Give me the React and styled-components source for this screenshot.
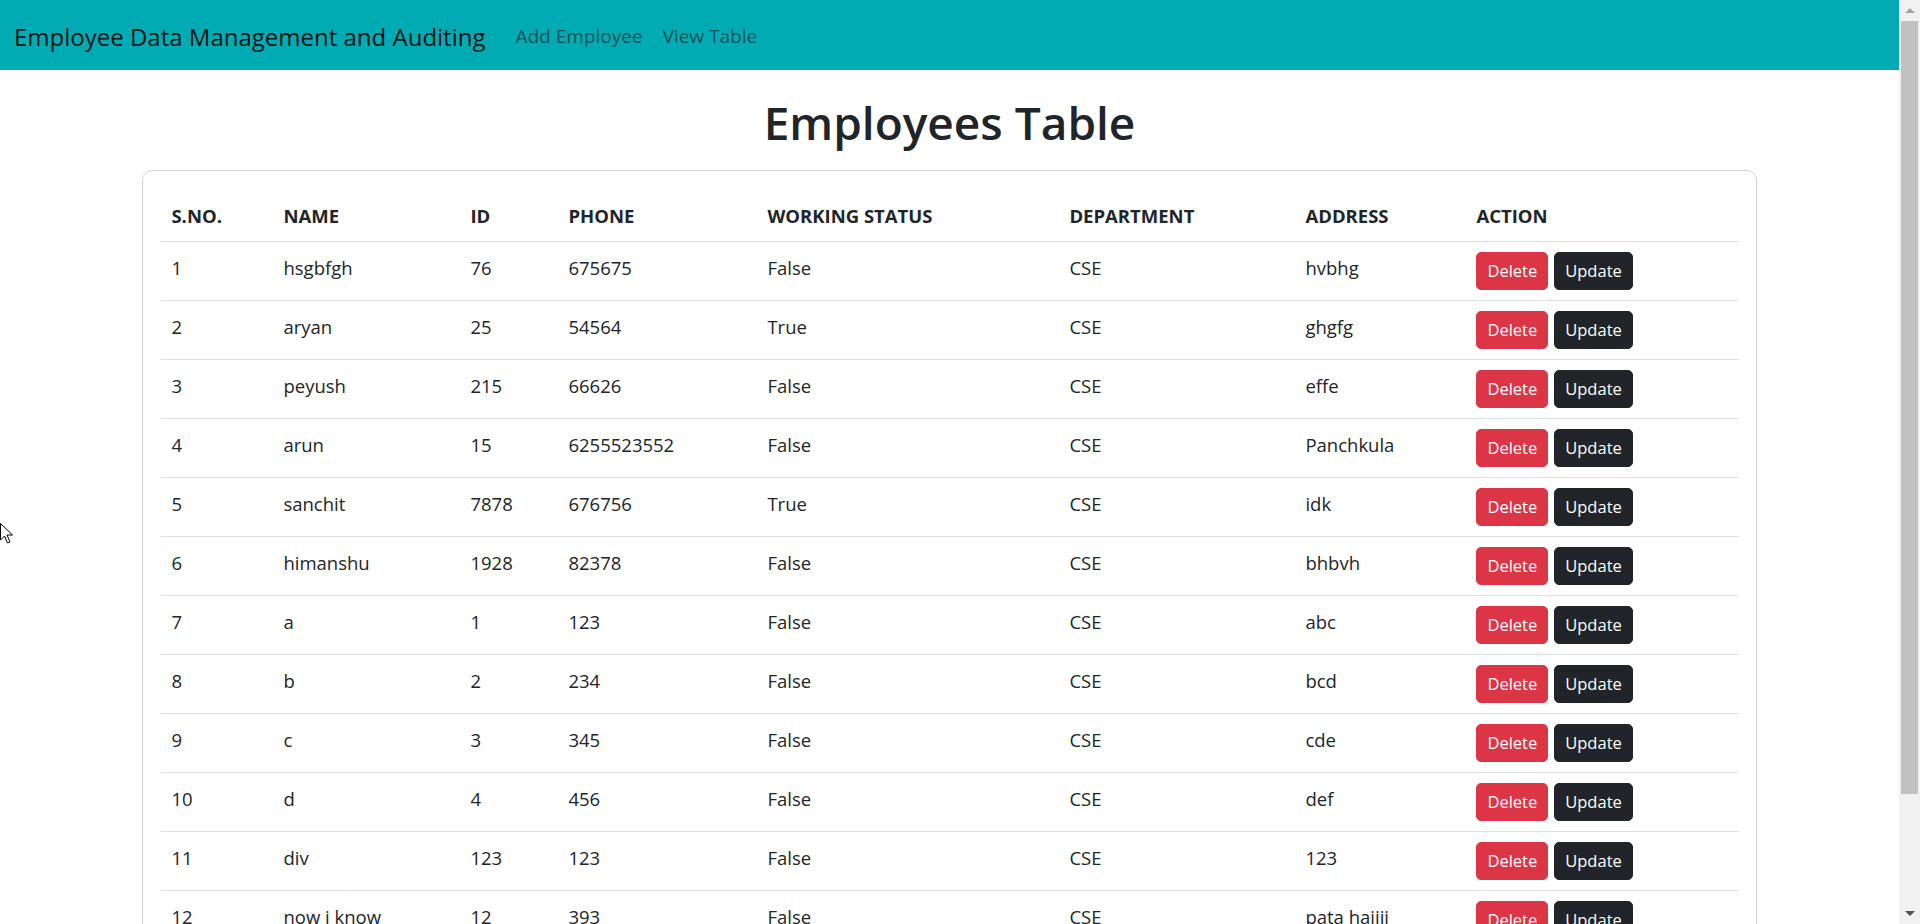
import React from "react";
import styled, { createGlobalStyle } from "styled-components";

const GlobalStyle = createGlobalStyle`
  html {
    scrollbar-width: none;
  }

  html::-webkit-scrollbar {
    display: none;
  }

  body {
    margin: 0;
    background: #fff;
    color: #212529;
    font-family: "Open Sans", "Noto Sans", sans-serif;
  }
`;

const Page = styled.div`
  margin-right: 21px;
`;

const Navbar = styled.nav`
  height: 70px;
  box-sizing: border-box;
  background: #00abb3;
  display: flex;
  align-items: center;
  padding: 2px 14px 0;
`;

const Brand = styled.a`
  font-size: 24px;
  color: rgba(0, 0, 0, 0.9);
  text-decoration: none;
  margin-right: 20px;
`;

const NavLink = styled.a`
  font-size: 19px;
  color: rgba(0, 0, 0, 0.55);
  text-decoration: none;
  padding: 0 10px;
`;

const Title = styled.h1`
  margin: 25px 0 20px;
  text-align: center;
  font-size: 46px;
  font-weight: 600;
  line-height: 1.2;
  color: #212529;
`;

const Card = styled.div`
  width: 85%;
  margin: 0 auto;
  box-sizing: border-box;
  border: 1px solid rgba(0, 0, 0, 0.175);
  border-radius: 10px;
  padding: 20px 18px 0;
`;

const Table = styled.table`
  width: 100%;
  border-collapse: collapse;
  table-layout: fixed;
  margin-bottom: 20px;
  font-size: 18.5px;
  line-height: 30px;
`;

const Th = styled.th`
  width: ${(p) => p.$w - 20}px;
  text-align: left;
  font-weight: 700;
  padding: 10px;
  border-bottom: 1px solid #dee2e6;
  vertical-align: top;
`;

const Td = styled.td`
  padding: 11px 10px 10px;
  border-bottom: 1px solid #dee2e6;
  vertical-align: top;
  white-space: nowrap;
`;

const Actions = styled.div`
  display: flex;
  gap: 6px;
  margin-top: -1px;
`;

const Button = styled.button`
  height: 38px;
  box-sizing: border-box;
  padding: 0 10px;
  font-family: inherit;
  font-size: 16.5px;
  line-height: 36px;
  border-radius: 5px;
  border: 1px solid ${(p) => (p.$danger ? "#dc3545" : "#212529")};
  background: ${(p) => (p.$danger ? "#dc3545" : "#212529")};
  color: #fff;
  cursor: pointer;
`;

/* the browser's scrollbar as it appears in the screenshot */
const ScrollTrack = styled.div`
  position: fixed;
  top: 0;
  right: 0;
  width: 21px;
  height: 100vh;
  background: #f1f1f1;
  display: flex;
  flex-direction: column;
`;

const ScrollArrow = styled.div`
  height: 21px;
  flex: none;
  display: flex;
  align-items: center;
  justify-content: center;

  &::before {
    content: "";
    border-left: 5px solid transparent;
    border-right: 5px solid transparent;
    ${(p) =>
      p.$down
        ? "border-top: 5px solid #505050;"
        : "border-bottom: 5px solid #a3a3a3;"}
  }
`;

const ScrollThumb = styled.div`
  height: 773px;
  margin: 0 2px;
  background: #c1c1c1;
  flex: none;
`;

const ScrollRest = styled.div`
  flex: 1;
`;

const Cursor = styled.svg`
  position: fixed;
  left: 0;
  top: 523px;
  width: 13px;
  height: 21px;
`;

const columns = [
  { label: "S.NO.", w: 112 },
  { label: "NAME", w: 187 },
  { label: "ID", w: 98 },
  { label: "PHONE", w: 199 },
  { label: "WORKING STATUS", w: 302 },
  { label: "DEPARTMENT", w: 236 },
  { label: "ADDRESS", w: 171 },
  { label: "ACTION", w: 273 },
];

const employees = [
  ["hsgbfgh", "76", "675675", "False", "CSE", "hvbhg"],
  ["aryan", "25", "54564", "True", "CSE", "ghgfg"],
  ["peyush", "215", "66626", "False", "CSE", "effe"],
  ["arun", "15", "6255523552", "False", "CSE", "Panchkula"],
  ["sanchit", "7878", "676756", "True", "CSE", "idk"],
  ["himanshu", "1928", "82378", "False", "CSE", "bhbvh"],
  ["a", "1", "123", "False", "CSE", "abc"],
  ["b", "2", "234", "False", "CSE", "bcd"],
  ["c", "3", "345", "False", "CSE", "cde"],
  ["d", "4", "456", "False", "CSE", "def"],
  ["div", "123", "123", "False", "CSE", "123"],
  ["now i know", "12", "393", "False", "CSE", "pata haiiii"],
  ["test", "99", "9999", "False", "CSE", "xyz"],
];

const App = () => {
  return (
    <>
      <GlobalStyle />
      <Page>
        <Navbar>
          <Brand href="#">Employee Data Management and Auditing</Brand>
          <NavLink href="#">Add Employee</NavLink>
          <NavLink href="#">View Table</NavLink>
        </Navbar>
        <Title>Employees Table</Title>
        <Card>
          <Table>
            <thead>
              <tr>
                {columns.map((c) => (
                  <Th key={c.label} $w={c.w}>
                    {c.label}
                  </Th>
                ))}
              </tr>
            </thead>
            <tbody>
              {employees.map((row, i) => (
                <tr key={i}>
                  <Td>{i + 1}</Td>
                  {row.map((cell, j) => (
                    <Td key={j}>{cell}</Td>
                  ))}
                  <Td>
                    <Actions>
                      <Button $danger>Delete</Button>
                      <Button>Update</Button>
                    </Actions>
                  </Td>
                </tr>
              ))}
            </tbody>
          </Table>
        </Card>
      </Page>
      <ScrollTrack>
        <ScrollArrow />
        <ScrollThumb />
        <ScrollRest />
        <ScrollArrow $down />
      </ScrollTrack>
      <Cursor viewBox="0 0 13 21">
        <path
          d="M0.5 0.5 L0.5 17 L4.5 13 L7.5 20 L10 19 L7 12 L12.5 12 Z"
          fill="#fff"
          stroke="#000"
          strokeWidth="1"
          strokeLinejoin="round"
        />
      </Cursor>
    </>
  );
};

export default App;
